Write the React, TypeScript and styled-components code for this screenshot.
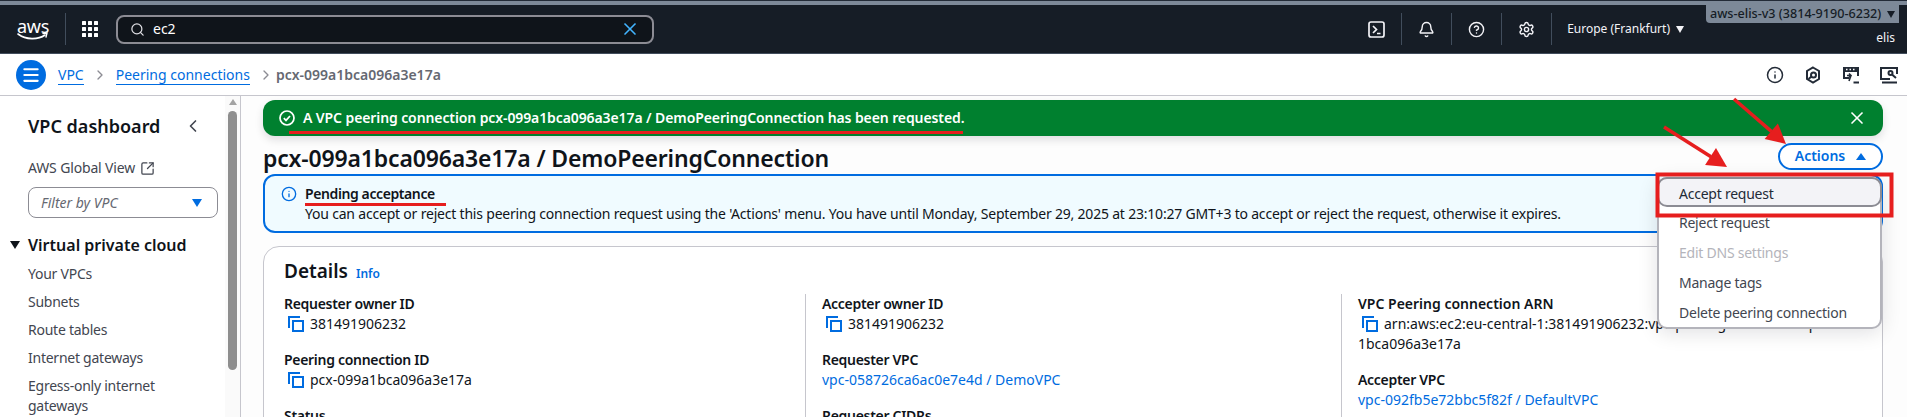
import React from 'react';
import styled, { createGlobalStyle } from 'styled-components';
import {
  Bell,
  ChevronLeft,
  ChevronRight,
  CircleHelp,
  Info,
  Menu,
  Search,
  Settings,
  SquareArrowOutUpRight,
  X,
} from 'lucide-react';

const GlobalStyle = createGlobalStyle`
  html, body {
    margin: 0;
    padding: 0;
    background: #fff;
    overflow: hidden;
  }
  body {
    font-family: "Noto Sans", "Open Sans", sans-serif;
    font-size: 14px;
    line-height: 20px;
    color: #0f141a;
  }
`;

const Page = styled.div`
  position: relative;
  width: 1907px;
  height: 417px;
  overflow: hidden;
  display: flex;
  flex-direction: column;
`;

const TopStrip = styled.div`
  height: 4px;
  border-top: 1px solid #232b37;
  background: #7d8998;
`;

const TopBar = styled.header`
  height: 48px;
  border-bottom: 1px solid #414d5c;
  background: #161d26;
  display: flex;
  align-items: center;
  padding-left: 17px;
  color: #fff;
`;

const LogoWrap = styled.div`
  position: relative;
  width: 32px;
  height: 24px;
  color: #fff;
  font-size: 18px;
  line-height: 18px;
  letter-spacing: -0.3px;
  text-align: center;
`;

const Smile = styled.svg`
  position: absolute;
  left: 0;
  top: 15px;
`;

const BarDivider = styled.span<{ $gap: number }>`
  width: 1px;
  height: 32px;
  background: #414d5c;
  margin: 0 ${(p) => p.$gap}px;
`;

const SearchBox = styled.div`
  width: 538px;
  height: 29px;
  box-sizing: border-box;
  margin-left: 18px;
  border: 2px solid #8c8c94;
  border-radius: 8px;
  background: #0f141a;
  display: flex;
  align-items: center;
  padding: 0 12px 0 12px;
  color: #fff;
  font-size: 14px;
`;

const SearchText = styled.span`
  flex: 1;
  margin-left: 8px;
`;

const BarRight = styled.div`
  margin-left: auto;
  display: flex;
  align-items: center;
  height: 100%;
`;

const BarIcon = styled.div`
  width: 18px;
  display: flex;
  justify-content: center;
  color: #f3f3f7;
`;

const Region = styled.span`
  font-size: 12px;
  color: #f3f3f7;
`;

const SmallCaret = styled.span`
  display: inline-block;
  width: 0;
  height: 0;
  border-left: 4px solid transparent;
  border-right: 4px solid transparent;
  border-top: 7px solid currentColor;
  margin-left: 6px;
`;

const Account = styled.div`
  align-self: flex-start;
  margin-left: 22px;
  margin-right: 8px;
  display: flex;
  flex-direction: column;
  align-items: flex-end;
`;

const AccountBadge = styled.div`
  width: 193px;
  height: 18px;
  box-sizing: border-box;
  background: #7d8998;
  border-radius: 0 0 0 4px;
  color: #161d26;
  font-size: 12.6px;
  line-height: 17px;
  font-weight: 500;
  padding-left: 4px;
  white-space: nowrap;
`;

const AccountName = styled.div`
  margin-top: 6px;
  margin-right: 4px;
  font-size: 12px;
  line-height: 18px;
  color: #f3f3f7;
`;

const CrumbBar = styled.div`
  height: 41px;
  border-bottom: 1px solid #c6c6cd;
  display: flex;
  align-items: center;
  padding-left: 16px;
`;

const MenuButton = styled.div`
  width: 30px;
  height: 30px;
  border-radius: 50%;
  background: #006ce0;
  color: #fff;
  display: flex;
  align-items: center;
  justify-content: center;
  margin-right: 12px;
`;

const CrumbLink = styled.a`
  color: #006ce0;
  border-bottom: 1px solid #006ce0;
  line-height: 19px;
`;

const CrumbSep = styled.div`
  width: 32px;
  display: flex;
  justify-content: center;
  color: #8c8c94;
`;

const CrumbCurrent = styled.span`
  color: #656871;
  font-weight: 600;
  margin-left: -6px;
`;

const CrumbTools = styled.div`
  margin-left: auto;
  display: flex;
  align-items: center;
  gap: 20px;
  margin-right: 9px;
  color: #232b37;
`;

const Body = styled.div`
  flex: 1;
  display: flex;
  min-height: 0;
`;

const Sidebar = styled.aside`
  width: 240px;
  flex: none;
  border-right: 1px solid #c6c6cd;
  display: flex;
`;

const SideContent = styled.nav`
  flex: 1;
  padding: 19px 0 0 28px;
  position: relative;
`;

const SideTitle = styled.div`
  width: 175px;
  display: flex;
  justify-content: space-between;
  align-items: center;
  font-size: 18px;
  line-height: 22px;
  font-weight: 600;
`;

const GlobalView = styled.div`
  margin-top: 21px;
  display: flex;
  align-items: center;
  gap: 5px;
  color: #424650;
  letter-spacing: -0.15px;
`;

const Filter = styled.div`
  margin-top: 9px;
  width: 190px;
  height: 31px;
  box-sizing: border-box;
  border: 1px solid #8c8c94;
  border-radius: 8px;
  display: flex;
  align-items: center;
  justify-content: space-between;
  padding: 0 15px 0 12px;
  font-style: italic;
  color: #656871;
`;

const BlueCaret = styled.span`
  width: 0;
  height: 0;
  border-left: 5.5px solid transparent;
  border-right: 5.5px solid transparent;
  border-top: 8px solid #006ce0;
`;

const SectionHead = styled.div`
  position: relative;
  margin-top: 17px;
  font-size: 16px;
  line-height: 20px;
  font-weight: 600;
`;

const SectionCaret = styled.span`
  position: absolute;
  left: -18px;
  top: 6px;
  width: 0;
  height: 0;
  border-left: 5px solid transparent;
  border-right: 5px solid transparent;
  border-top: 8px solid #0f141a;
`;

const NavList = styled.div`
  margin-top: 9px;
  display: flex;
  flex-direction: column;
  gap: 8px;
  width: 170px;
  color: #424650;
  letter-spacing: -0.25px;
`;

const Gutter = styled.div`
  width: 15px;
  flex: none;
  background: #fafafa;
  display: flex;
  flex-direction: column;
  align-items: center;
`;

const GutterArrow = styled.span`
  margin-top: 3px;
  width: 0;
  height: 0;
  border-left: 4px solid transparent;
  border-right: 4px solid transparent;
  border-bottom: 6px solid #a3a3a3;
`;

const GutterThumb = styled.span`
  margin-top: 6px;
  width: 9px;
  height: 259px;
  border-radius: 5px;
  background: #8e8e8e;
`;

const Main = styled.main`
  flex: 1;
  min-width: 0;
  padding: 4px 24px 0 22px;
  background: #fdfdfd;
`;

const Flash = styled.div`
  height: 36px;
  border-radius: 12px;
  background: #00802f;
  color: #fff;
  display: flex;
  align-items: center;
  padding: 0 16px 0 16px;
  font-weight: 600;
  box-shadow: 0 4px 8px rgba(0, 7, 22, 0.12);
`;

const FlashText = styled.span`
  flex: 1;
  margin-left: 8px;
  letter-spacing: -0.1px;
`;

const Strong = styled.span`
  font-weight: 600;
`;

const TitleRow = styled.div`
  position: relative;
  height: 38px;
  display: flex;
  align-items: center;
  justify-content: space-between;
`;

const PageTitle = styled.h1`
  margin: 6px 0 0;
  font-size: 23px;
  line-height: 30px;
  font-weight: 600;
  letter-spacing: -0.16px;
`;

const ActionsButton = styled.div`
  margin-top: 2px;
  width: 105px;
  height: 27px;
  box-sizing: border-box;
  border: 2px solid #006ce0;
  border-radius: 20px;
  display: flex;
  align-items: center;
  justify-content: center;
  gap: 11px;
  color: #006ce0;
  font-weight: 600;
  background: #fff;
`;

const UpCaret = styled.span`
  width: 0;
  height: 0;
  border-left: 5px solid transparent;
  border-right: 5px solid transparent;
  border-bottom: 7px solid #006ce0;
`;

const ActionsMenu = styled.div`
  position: absolute;
  top: 41px;
  right: 1px;
  z-index: 2;
  width: 225px;
  box-sizing: border-box;
  border: 2px solid #b4b4bb;
  border-radius: 10px;
  background: #fff;
  box-shadow: 0 4px 20px rgba(0, 7, 22, 0.12);
`;

const MenuItem = styled.div<{ $disabled?: boolean }>`
  height: 30px;
  box-sizing: border-box;
  display: flex;
  align-items: center;
  padding: 2px 0 0 20px;
  letter-spacing: -0.24px;
  color: ${(p) => (p.$disabled ? '#b4b4bb' : '#424650')};
`;

const ActiveMenuItem = styled(MenuItem)`
  margin: -2px -2px 0;
  padding-top: 3px;
  border: 2px solid #8c8c94;
  border-radius: 10px;
  background: #f3f3f7;
  color: #232b37;
`;

const Alert = styled.div`
  height: 59px;
  box-sizing: border-box;
  border: 2px solid #006ce0;
  border-radius: 12px;
  background: #f0fbff;
  display: flex;
  padding: 8px 0 0 16px;
`;

const AlertIcon = styled.div`
  width: 16px;
  margin-right: 8px;
  color: #006ce0;
  padding-top: 2px;
`;

const AlertBody = styled.div`
  flex: 1;
`;

const AlertTitle = styled.div`
  font-weight: 600;
  letter-spacing: -0.4px;
`;

const AlertText = styled.div`
  letter-spacing: -0.2px;
`;

const Card = styled.section`
  margin-top: 13px;
  border: 1px solid #c6c6cd;
  border-radius: 16px;
  height: 400px;
  padding: 13px 0 0 20px;
  background: #fff;
`;

const CardHead = styled.div`
  display: flex;
  align-items: baseline;
  gap: 8px;
`;

const CardTitle = styled.h2`
  margin: 0;
  font-size: 19px;
  line-height: 22px;
  font-weight: 600;
`;

const InfoLink = styled.a`
  color: #006ce0;
  font-size: 12px;
  font-weight: 600;
`;

const Columns = styled.div`
  margin-top: 10px;
  display: grid;
  grid-template-columns: 521px 536px 1fr;
`;

const Column = styled.div<{ $first?: boolean }>`
  padding-left: ${(p) => (p.$first ? 0 : 16)}px;
  border-left: ${(p) => (p.$first ? 'none' : '1px solid #c6c6cd')};
  min-height: 200px;
`;

const Field = styled.div`
  margin-bottom: 16px;
`;

const FieldLabel = styled.div<{ $wide?: boolean }>`
  font-weight: 600;
  letter-spacing: ${(p) => (p.$wide ? 0 : -0.3)}px;
`;

const FieldValue = styled.div`
  display: flex;
  align-items: center;
`;

const FieldText = styled.div`
  white-space: nowrap;
`;

const CopyIcon = styled.svg`
  flex: none;
  margin: 0 6px 0 4px;
`;

const ValueLink = styled.a`
  color: #006ce0;
`;

/* red markup drawn over the screenshot */
const Markup = styled.svg`
  position: absolute;
  inset: 0;
  z-index: 5;
  pointer-events: none;
`;

const RED = '#e61e1e';

function CopyGlyph() {
  return (
    <CopyIcon width="16" height="16" viewBox="0 0 16 16" fill="none" stroke="#006ce0" strokeWidth="2">
      <path d="M1 12V1h11" />
      <rect x="5" y="5" width="10" height="10" />
    </CopyIcon>
  );
}

function Arrow({ x1, y1, x2, y2 }: { x1: number; y1: number; x2: number; y2: number }) {
  const angle = Math.atan2(y2 - y1, x2 - x1);
  const len = 22;
  const spread = 0.48;
  const a = [x2 - len * Math.cos(angle - spread), y2 - len * Math.sin(angle - spread)];
  const b = [x2 - len * Math.cos(angle + spread), y2 - len * Math.sin(angle + spread)];
  const mx = x2 - (len - 3) * Math.cos(angle);
  const my = y2 - (len - 3) * Math.sin(angle);
  return (
    <g>
      <line x1={x1} y1={y1} x2={mx} y2={my} stroke={RED} strokeWidth="3.5" />
      <polygon points={`${x2},${y2} ${a[0]},${a[1]} ${b[0]},${b[1]}`} fill={RED} />
    </g>
  );
}

export default function App() {
  return (
    <Page>
      <GlobalStyle />
      <TopStrip />
      <TopBar>
        <LogoWrap>
          aws
          <Smile width="32" height="9" viewBox="0 0 32 9" fill="none">
            <path d="M1 2c8 6 20 6 27 1" stroke="#fff" strokeWidth="1.6" strokeLinecap="round" />
            <path d="M26 1.5l4-.5-1 4" stroke="#fff" strokeWidth="1.4" strokeLinecap="round" />
          </Smile>
        </LogoWrap>
        <BarDivider $gap={16} />
        <svg width="16" height="16" viewBox="0 0 16 16" fill="#fff">
          {[0, 6, 12].flatMap((x) =>
            [0, 6, 12].map((y) => <rect key={`${x}-${y}`} x={x} y={y} width="4" height="4" rx="0.5" />),
          )}
        </svg>
        <SearchBox>
          <Search size={15} color="#dedee3" strokeWidth={2} />
          <SearchText>ec2</SearchText>
          <X size={20} color="#42b4ff" strokeWidth={2} />
        </SearchBox>
        <BarRight>
          <BarIcon>
            <svg width="17" height="17" viewBox="0 0 17 17" fill="none" stroke="#f3f3f7" strokeWidth="1.7">
              <rect x="1" y="1" width="15" height="15" rx="2" />
              <path d="M5 5l3.5 3.5L5 12M9 12.5h3.5" />
            </svg>
          </BarIcon>
          <BarDivider $gap={15.5} />
          <BarIcon>
            <Bell size={17} strokeWidth={2} />
          </BarIcon>
          <BarDivider $gap={15.5} />
          <BarIcon>
            <CircleHelp size={17} strokeWidth={2} />
          </BarIcon>
          <BarDivider $gap={15.5} />
          <BarIcon>
            <Settings size={17} strokeWidth={2} />
          </BarIcon>
          <BarDivider $gap={15.5} />
          <Region>
            Europe (Frankfurt)
            <SmallCaret />
          </Region>
          <Account>
            <AccountBadge>
              aws-elis-v3 (3814-9190-6232)
              <SmallCaret />
            </AccountBadge>
            <AccountName>elis</AccountName>
          </Account>
        </BarRight>
      </TopBar>
      <CrumbBar>
        <MenuButton>
          <Menu size={20} strokeWidth={2.5} />
        </MenuButton>
        <CrumbLink>VPC</CrumbLink>
        <CrumbSep>
          <ChevronRight size={16} strokeWidth={2} />
        </CrumbSep>
        <CrumbLink>Peering connections</CrumbLink>
        <CrumbSep>
          <ChevronRight size={16} strokeWidth={2} />
        </CrumbSep>
        <CrumbCurrent>pcx-099a1bca096a3e17a</CrumbCurrent>
        <CrumbTools>
          <Info size={18} strokeWidth={2} />
          <svg width="18" height="18" viewBox="0 0 18 18" fill="none" stroke="#232b37" strokeWidth="2">
            <path d="M9 1.5l6 3.5v8l-6 3.5-6-3.5V5z" />
            <circle cx="9.5" cy="9" r="2.5" />
            <path d="M7.5 10.5L4.5 13" />
          </svg>
          <svg width="18" height="18" viewBox="0 0 18 18" fill="none" stroke="#232b37" strokeWidth="2">
            <path d="M7 12H2V2h14v8" />
            <rect x="1" y="1" width="16" height="5" fill="#232b37" stroke="none" />
            <path d="M4 3.5h1.5M7.5 3.5H9M11 3.5h1.5" stroke="#fff" strokeWidth="1.5" />
            <path d="M5 9.5h4M7 7.5l2 2-2 2M7 15l2-5.5" strokeWidth="1.6" />
            <path d="M11.5 16.5H17" />
          </svg>
          <svg width="18" height="18" viewBox="0 0 18 18" fill="none" stroke="#232b37" strokeWidth="2">
            <path d="M17 8V2H1v11h9" />
            <circle cx="10.5" cy="7" r="2" />
            <path d="M12 8.5l4 3.5M2 16.5h15" />
          </svg>
        </CrumbTools>
      </CrumbBar>
      <Body>
        <Sidebar>
          <SideContent>
            <SideTitle>
              VPC dashboard
              <ChevronLeft size={20} strokeWidth={2} color="#424650" />
            </SideTitle>
            <GlobalView>
              AWS Global View
              <SquareArrowOutUpRight size={15} strokeWidth={2} color="#424650" />
            </GlobalView>
            <Filter>
              Filter by VPC
              <BlueCaret />
            </Filter>
            <SectionHead>
              <SectionCaret />
              Virtual private cloud
            </SectionHead>
            <NavList>
              <span>Your VPCs</span>
              <span>Subnets</span>
              <span>Route tables</span>
              <span>Internet gateways</span>
              <span>Egress-only internet gateways</span>
            </NavList>
          </SideContent>
          <Gutter>
            <GutterArrow />
            <GutterThumb />
          </Gutter>
        </Sidebar>
        <Main>
          <Flash>
            <svg width="16" height="16" viewBox="0 0 16 16" fill="none" stroke="#fff" strokeWidth="1.7">
              <circle cx="8" cy="8" r="7" />
              <path d="M4.8 8.2l2.2 2.2 4-4.4" />
            </svg>
            <FlashText>
              A VPC peering connection <Strong>pcx-099a1bca096a3e17a / DemoPeeringConnection</Strong> has been
              requested.
            </FlashText>
            <X size={20} strokeWidth={2} color="#fff" />
          </Flash>
          <TitleRow>
            <PageTitle>pcx-099a1bca096a3e17a / DemoPeeringConnection</PageTitle>
            <ActionsButton>
              Actions
              <UpCaret />
            </ActionsButton>
            <ActionsMenu>
              <ActiveMenuItem>Accept request</ActiveMenuItem>
              <MenuItem>Reject request</MenuItem>
              <MenuItem $disabled>Edit DNS settings</MenuItem>
              <MenuItem>Manage tags</MenuItem>
              <MenuItem>Delete peering connection</MenuItem>
            </ActionsMenu>
          </TitleRow>
          <Alert>
            <AlertIcon>
              <Info size={16} strokeWidth={2} />
            </AlertIcon>
            <AlertBody>
              <AlertTitle>Pending acceptance</AlertTitle>
              <AlertText>
                You can accept or reject this peering connection request using the 'Actions' menu. You have until
                Monday, September 29, 2025 at 23:10:27 GMT+3 to accept or reject the request, otherwise it expires.
              </AlertText>
            </AlertBody>
          </Alert>
          <Card>
            <CardHead>
              <CardTitle>Details</CardTitle>
              <InfoLink>Info</InfoLink>
            </CardHead>
            <Columns>
              <Column $first>
                <Field>
                  <FieldLabel>Requester owner ID</FieldLabel>
                  <FieldValue>
                    <CopyGlyph />
                    <FieldText>381491906232</FieldText>
                  </FieldValue>
                </Field>
                <Field>
                  <FieldLabel>Peering connection ID</FieldLabel>
                  <FieldValue>
                    <CopyGlyph />
                    <FieldText>pcx-099a1bca096a3e17a</FieldText>
                  </FieldValue>
                </Field>
                <Field>
                  <FieldLabel>Status</FieldLabel>
                </Field>
              </Column>
              <Column>
                <Field>
                  <FieldLabel>Accepter owner ID</FieldLabel>
                  <FieldValue>
                    <CopyGlyph />
                    <FieldText>381491906232</FieldText>
                  </FieldValue>
                </Field>
                <Field>
                  <FieldLabel>Requester VPC</FieldLabel>
                  <ValueLink>vpc-058726ca6ac0e7e4d / DemoVPC</ValueLink>
                </Field>
                <Field>
                  <FieldLabel>Requester CIDRs</FieldLabel>
                </Field>
              </Column>
              <Column>
                <Field>
                  <FieldLabel $wide>VPC Peering connection ARN</FieldLabel>
                  <FieldValue>
                    <CopyGlyph />
                    <FieldText>arn:aws:ec2:eu-central-1:381491906232:vpc-peering-connection/pcx-099a</FieldText>
                  </FieldValue>
                  <div>1bca096a3e17a</div>
                </Field>
                <Field>
                  <FieldLabel>Accepter VPC</FieldLabel>
                  <ValueLink>vpc-092fb5e72bbc5f82f / DefaultVPC</ValueLink>
                </Field>
              </Column>
            </Columns>
          </Card>
        </Main>
      </Body>
      <Markup width="1907" height="417" viewBox="0 0 1907 417" fill="none">
        <line x1="289" y1="132.5" x2="963" y2="132.5" stroke={RED} strokeWidth="3" />
        <line x1="305" y1="204.5" x2="446" y2="204.5" stroke={RED} strokeWidth="3" />
        <Arrow x1={1734} y1={99} x2={1786} y2={144} />
        <Arrow x1={1664} y1={127} x2={1727} y2={167} />
        <rect x="1657.5" y="174.5" width="234" height="41" stroke={RED} strokeWidth="4" />
      </Markup>
    </Page>
  );
}
